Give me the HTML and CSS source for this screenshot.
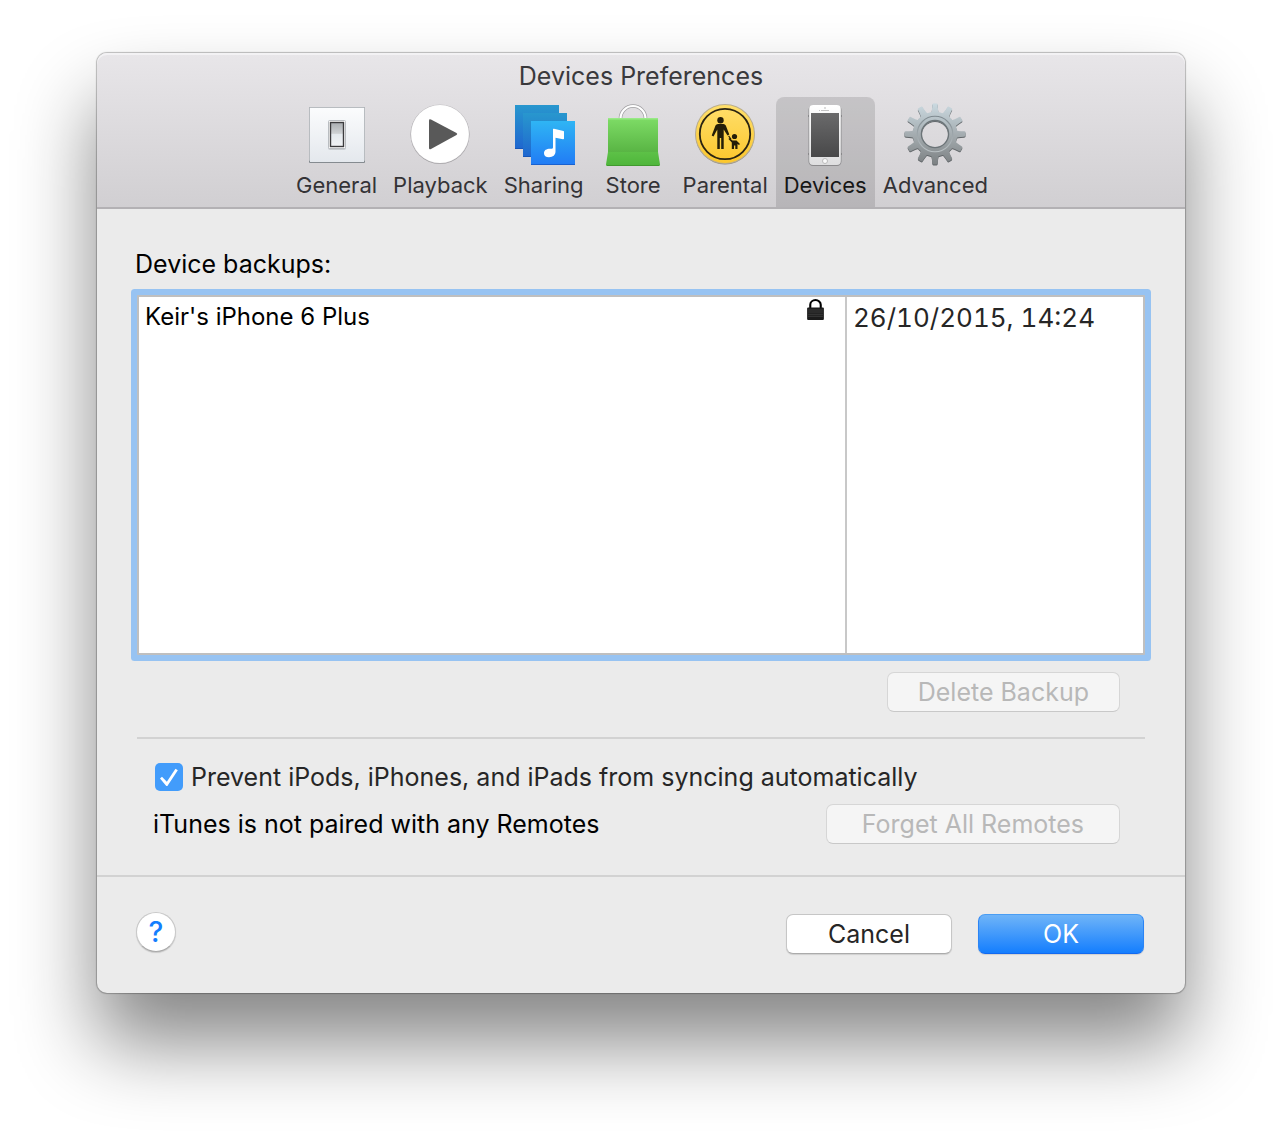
FILE: index.html
```html
<!DOCTYPE html>
<html lang="en">
<head>
    <meta charset="UTF-8">
    <meta name="viewport" content="width=device-width, initial-scale=1.0">
    <title>Devices Preferences</title>
    <link rel="stylesheet" href="styles.css">
</head>
<body>
    <main class="window">
        <header class="titlebar">
            <h1 class="title">Devices Preferences</h1>
            <nav class="toolbar">
                <button class="tool">
                    <svg class="tool-icon" viewBox="0 0 64 64" aria-hidden="true">
                        <defs>
                            <linearGradient id="plate" x2="0" y2="1"><stop offset="0" stop-color="#fbfcfd"/><stop offset="1" stop-color="#e4e8ed"/></linearGradient>
                            <linearGradient id="rocker" x2="0" y2="1"><stop offset="0" stop-color="#a9adb0"/><stop offset=".45" stop-color="#ced1d3"/><stop offset=".5" stop-color="#e4e9ed"/><stop offset="1" stop-color="#f1f3f5"/></linearGradient>
                        </defs>
                        <rect x="4" y="4" width="56" height="56" rx="1" fill="#858b90"/>
                        <rect x="4" y="4" width="56" height="54" rx="1" fill="#b8bcc0"/>
                        <rect x="5" y="5" width="54" height="54" fill="url(#plate)"/>
                        <rect x="23" y="18" width="18" height="29" rx="2" fill="#c9cdd1"/>
                        <rect x="23.500" y="17.500" width="17" height="28" rx="1" fill="#fff" stroke="#b9bdc1"/>
                        <rect x="25.500" y="19.500" width="13" height="24" fill="url(#rocker)" stroke="#3b3b3d" stroke-width="1.400"/>
                    </svg>
                    <span>General</span>
                </button>
                <button class="tool">
                    <svg class="tool-icon" viewBox="0 0 64 64" aria-hidden="true">
                        <circle cx="32" cy="31.500" r="29.500" fill="#a09ea1"/>
                        <circle cx="32" cy="31" r="29.500" fill="#c2c0c3"/>
                        <circle cx="32" cy="31" r="28.900" fill="#fff"/>
                        <path d="M21 17.500Q21 15.500 23 16.500L48.500 30Q50 31 48.500 32L23 46Q21 47 21 45Z" fill="#595959"/>
                    </svg>
                    <span>Playback</span>
                </button>
                <button class="tool">
                    <svg class="tool-icon" viewBox="0 0 64 64" aria-hidden="true">
                        <defs>
                            <linearGradient id="backSheet" x2="0" y2="1"><stop offset="0" stop-color="#2897ce"/><stop offset="1" stop-color="#1f66cf"/></linearGradient>
                            <linearGradient id="frontSheet" x2="0" y2="1"><stop offset="0" stop-color="#2fb5f4"/><stop offset="1" stop-color="#217bf5"/></linearGradient>
                        </defs>
                        <path fill="url(#backSheet)" d="M3 2h44v44H3z"/>
                        <path fill="#1755b5" d="M3 45h44v1H3z"/>
                        <path fill="url(#backSheet)" d="M11 10h44v44H11z"/>
                        <path fill="#1755b5" d="M11 53h44v1H11z"/>
                        <path fill="url(#frontSheet)" d="M19 18h44v44H19z"/>
                        <path fill="#1961cf" d="M19 61h44v1H19z"/>
                        <path fill="#fff" d="M41 26Q41 25.500 42 25.700L51.500 28Q52 28.100 52 29V35.500Q52 36.500 51 36.300L43.500 34.800V48.500C43.500 52 41 54.200 37 54.200C33.800 54.200 32 52.700 32 50.200C32 47.300 34.500 45.800 38 45.800C39.500 45.800 41 45.800 41 44.500Z"/>
                    </svg>
                    <span>Sharing</span>
                </button>
                <button class="tool">
                    <svg class="tool-icon" viewBox="0 0 64 64" aria-hidden="true">
                        <defs>
                            <linearGradient id="bag" x2="0" y2="1"><stop offset="0" stop-color="#7edc66"/><stop offset="1" stop-color="#59b544"/></linearGradient>
                            <linearGradient id="bagFold" x2="0" y2="1"><stop offset="0" stop-color="#5dc147"/><stop offset="1" stop-color="#4eb53a"/></linearGradient>
                        </defs>
                        <path d="M19.500 16V15.500a12.500 12.500 0 0 1 25 0V16" fill="none" stroke="#a09fa2" stroke-width="3.600"/>
                        <path d="M19.500 16V15.500a12.500 12.500 0 0 1 25 0V16" fill="none" stroke="#fff" stroke-width="2.200"/>
                        <path fill="url(#bag)" d="M7 15h50v34H7z"/>
                        <path fill="#98e986" d="M7 15h50v1.500H7z"/>
                        <path fill="url(#bagFold)" d="M7 49h50l2 12.500Q59 63 57.500 63h-51Q5 63 5 61.500z"/>
                        <path fill="#41992f" d="M5.500 62h53L57.500 63h-51z"/>
                    </svg>
                    <span>Store</span>
                </button>
                <button class="tool">
                    <svg class="tool-icon" viewBox="0 0 64 64" aria-hidden="true">
                        <defs>
                            <linearGradient id="sign" x2="0" y2="1"><stop offset="0" stop-color="#ffdf6b"/><stop offset="1" stop-color="#fcc72c"/></linearGradient>
                        </defs>
                        <circle cx="32" cy="32" r="29.500" fill="#8d8a85"/>
                        <circle cx="32" cy="31" r="30" fill="#b9ad8d"/>
                        <circle cx="32" cy="31" r="29" fill="url(#sign)"/>
                        <circle cx="32" cy="31" r="25.200" fill="none" stroke="#2a2412" stroke-width="1.800"/>
                        <g fill="#241e08">
                            <circle cx="27.500" cy="17.200" r="3.200"/>
                            <path d="M25 21h5.500q1.500 0 2.300 1.500L36.300 31.500 34.500 32.500 30.700 26.500V46H28.200V35H26.800V46H24.300V26.500L20.500 33.500 18.700 32.500 22.500 22.500Q23.200 21 25 21z"/>
                            <path d="M36 32.500L38.500 36 37.500 36.700 35.200 33.300z"/>
                            <circle cx="41.500" cy="33.500" r="2.600"/>
                            <path d="M36.300 35L39.500 37.500H43.500L47 41 46 42 44.500 41V46H42.300V42.500H41V46H38.800V39.500L35.500 36z"/>
                        </g>
                    </svg>
                    <span>Parental</span>
                </button>
                <button class="tool active" aria-current="page">
                    <svg class="tool-icon" viewBox="0 0 64 64" aria-hidden="true">
                        <defs>
                            <linearGradient id="phone" x2="0" y2="1"><stop offset="0" stop-color="#fff"/><stop offset="1" stop-color="#dededf"/></linearGradient>
                            <linearGradient id="screen" x2="0" y2="1"><stop offset="0" stop-color="#6a6a6b"/><stop offset="1" stop-color="#484849"/></linearGradient>
                        </defs>
                        <path fill="#858587" d="M15 12h34v2H15zM15 50h34v2H15z"/>
                        <rect x="15.500" y="2.500" width="33" height="60.500" rx="4.500" fill="#8c8b8d"/>
                        <rect x="16.200" y="2" width="31.600" height="60" rx="4" fill="url(#phone)"/>
                        <rect x="18" y="10" width="28" height="44" fill="url(#screen)"/>
                        <circle cx="32" cy="5" r="1" fill="#d0d0d0"/>
                        <path stroke="#c4c4c4" d="M28 7.500h8M26 7.500h1"/>
                        <circle cx="32" cy="58" r="2.500" fill="#fafafa" stroke="#bababa"/>
                    </svg>
                    <span>Devices</span>
                </button>
                <button class="tool">
                    <svg class="tool-icon" viewBox="-1 0 66 66" aria-hidden="true">
                        <defs>
                            <linearGradient id="metal" x2="0" y2="1"><stop offset="0" stop-color="#cbdae1"/><stop offset=".5" stop-color="#a5adb1"/><stop offset="1" stop-color="#7c8082"/></linearGradient>
                            <linearGradient id="ring" x2="0" y2="1"><stop offset="0" stop-color="#7f8a90"/><stop offset="1" stop-color="#b9c0c3"/></linearGradient>
                            <path id="tooth" d="M27.500 11Q29 9 29.200 2Q29.200 .5 30.400 .5H33.600Q34.800 .5 34.800 2Q35 9 36.500 11z"/>
                            <mask id="gearShape">
                                <g fill="#fff">
                                    <circle cx="32" cy="32" r="23"/>
                                    <use href="#tooth"/>
                                    <use href="#tooth" transform="rotate(30 32 32)"/>
                                    <use href="#tooth" transform="rotate(60 32 32)"/>
                                    <use href="#tooth" transform="rotate(90 32 32)"/>
                                    <use href="#tooth" transform="rotate(120 32 32)"/>
                                    <use href="#tooth" transform="rotate(150 32 32)"/>
                                    <use href="#tooth" transform="rotate(180 32 32)"/>
                                    <use href="#tooth" transform="rotate(210 32 32)"/>
                                    <use href="#tooth" transform="rotate(240 32 32)"/>
                                    <use href="#tooth" transform="rotate(270 32 32)"/>
                                    <use href="#tooth" transform="rotate(300 32 32)"/>
                                    <use href="#tooth" transform="rotate(330 32 32)"/>
                                </g>
                                <circle cx="32" cy="32" r="13.500" fill="#000"/>
                            </mask>
                        </defs>
                        <g class="gear">
                            <rect width="64" height="64" fill="url(#metal)" mask="url(#gearShape)"/>
                        </g>
                        <circle cx="32" cy="32" r="18.300" fill="none" stroke="url(#ring)" stroke-width="1.200"/>
                        <circle cx="32" cy="32" r="14" fill="none" stroke="#6c7478" stroke-width="1.400"/>
                    </svg>
                    <span>Advanced</span>
                </button>
            </nav>
        </header>

        <section class="content">
            <h2 class="list-label" id="backups-label">Device backups:</h2>
            <div class="list" tabindex="0">
                <table class="backups" aria-labelledby="backups-label">
                    <tr>
                        <td class="name">Keir's iPhone 6 Plus</td>
                        <td class="lock">
                            <svg class="lock-icon" viewBox="0 0 16 21" role="img" aria-label="Encrypted">
                                <path d="M3 9V5.500a5 4.500 0 0 1 10 0V9" fill="none" stroke="#000" stroke-width="2"/>
                                <rect y="8" width="16" height="12" rx="1" fill="#1b1b1b"/>
                                <path stroke="#3d3d3d" d="M1 10.500h14M1 12.500h14M1 14.500h14M1 16.500h14"/>
                            </svg>
                        </td>
                        <td class="date">26/10/2015, 14:24</td>
                    </tr>
                </table>
            </div>
            <div class="actions">
                <button class="btn" disabled>Delete Backup</button>
            </div>
            <div class="options">
                <label class="check-row">
                    <input type="checkbox" class="check" checked>
                    <span>Prevent iPods, iPhones, and iPads from syncing automatically</span>
                </label>
                <div class="remotes">
                    <p>iTunes is not paired with any Remotes</p>
                    <button class="btn wide" disabled>Forget All Remotes</button>
                </div>
            </div>
        </section>

        <footer class="footer">
            <button class="help" aria-label="Help">?</button>
            <div class="footer-buttons">
                <button class="btn">Cancel</button>
                <button class="btn primary">OK</button>
            </div>
        </footer>
    </main>
</body>
</html>
```
FILE: styles.css
```css
* {
    box-sizing: border-box;
}

body {
    margin: 0;
    padding: 53px 96px 148px 97px;
    background: #fff;
    color: #000;
    font-family: Inter, "Open Sans", sans-serif;
    font-size: 25px;
    line-height: 32px;
}

button {
    font: inherit;
    color: inherit;
    margin: 0;
}

h1, h2, p {
    margin: 0;
    font-size: inherit;
    font-weight: 400;
}

.window {
    background: #ebebeb;
    border-radius: 10px;
    box-shadow: 0 0 1px 1px rgba(0, 0, 0, 0.25), 0 50px 80px rgba(0, 0, 0, 0.48);
}

/* Title and toolbar */
.titlebar {
    background: linear-gradient(#e8e6e9, #d1cfd2);
    border-bottom: 2px solid #b3b1b4;
    border-radius: 10px 10px 0 0;
    box-shadow: inset 0 2px 0 #f3f2f4;
    color: #3a393c;
}

.title {
    padding-top: 2px;
    line-height: 42px;
    text-align: center;
}

.toolbar {
    display: flex;
    justify-content: center;
    padding-left: 2px;
}

.tool {
    display: flex;
    flex-direction: column;
    align-items: center;
    min-width: 83px;
    padding: 6px 8px 4px;
    border: none;
    border-radius: 8px 8px 0 0;
    background: none;
    color: #343336;
    font-size: 22px;
    line-height: 36px;
}

.tool.active {
    background: rgba(0, 0, 0, 0.12);
    color: #161616;
}

.tool-icon {
    width: 64px;
    height: 64px;
}

.gear {
    filter: drop-shadow(0 1px 0 #5d6265);
}

/* Backup list */
.content {
    padding: 36px 40px 31px 38px;
}

.list-label {
    line-height: 38px;
    margin-bottom: 12px;
}

.list {
    height: 360px;
    margin-left: 2px;
    border: 2px solid #bfbfbf;
    background: #fff;
    outline: none;
    box-shadow: 0 0 0 6px #97c3f2;
    border-radius: 1px;
}

.backups {
    width: 100%;
    height: 100%;
    border-collapse: collapse;
}

.backups td {
    padding: 4px 0 0 6px;
    vertical-align: top;
}

.backups .name {
    font-size: 24px;
}

.backups .lock {
    width: 45px;
    padding: 2px 21px 0 0;
    text-align: right;
}

.lock-icon {
    display: block;
    width: 17px;
    height: 22px;
    margin-left: auto;
}

.backups .date {
    width: 297px;
    padding-top: 5px;
    border-left: 2px solid #c8c8c8;
    color: #262626;
    font-size: 26px;
    font-variant-numeric: tabular-nums;
}

.actions {
    display: flex;
    justify-content: flex-end;
    margin-left: 2px;
    padding: 17px 25px 25px;
    border-bottom: 2px solid #d2d2d2;
}

/* Buttons */
.btn {
    min-width: 166px;
    height: 40px;
    padding: 0 30px;
    border: 1px solid #c6c6c6;
    border-bottom-color: #ababab;
    border-radius: 7px;
    background: #fff;
    box-shadow: 0 1px 1px rgba(0, 0, 0, 0.12);
    color: #262626;
    line-height: 38px;
}

.btn.wide {
    padding: 0 35px;
}

.btn:disabled {
    border-color: #d6d6d6;
    border-bottom-color: #c8c8c8;
    background: #f5f5f5;
    box-shadow: none;
    color: #b8b8b8;
}

.btn.primary {
    border-color: #4a9df3 #2b84f5 #1269f0;
    background: linear-gradient(#6fb4f8, #147efe);
    color: #fff;
}

/* Options */
.options {
    padding: 21px 25px 0 18px;
}

.check-row {
    display: flex;
    align-items: center;
    gap: 8px;
    height: 34px;
    padding-left: 2px;
    color: #262626;
}

.check {
    appearance: none;
    display: grid;
    place-items: center;
    width: 28px;
    height: 28px;
    margin: 0;
    border-radius: 5px;
    background: #429cfb;
}

.check:checked::before {
    content: "";
    width: 18px;
    height: 18px;
    background: #fff;
    clip-path: polygon(0 58%, 11% 49%, 38% 77%, 86% 4%, 99% 12%, 41% 100%, 35% 100%);
}

.remotes {
    display: flex;
    justify-content: space-between;
    align-items: center;
    margin-top: 10px;
}

/* Footer */
.footer {
    display: flex;
    justify-content: space-between;
    align-items: flex-start;
    padding: 35px 41px 39px 39px;
    border-top: 2px solid #d2d2d2;
}

.footer-buttons {
    display: flex;
    gap: 26px;
    padding-top: 2px;
}

.help {
    width: 40px;
    height: 40px;
    padding: 0;
    border: 1px solid #c8c8c8;
    border-bottom-color: #aaa;
    border-radius: 50%;
    background: #fff;
    box-shadow: 0 1px 1px rgba(0, 0, 0, 0.15);
    color: #147efe;
    font-size: 28px;
    font-weight: 500;
}
```
